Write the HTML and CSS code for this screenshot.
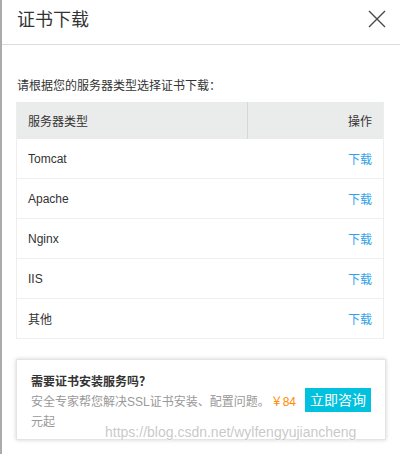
FILE: index.html
```html
<!DOCTYPE html>
<html>
<head>
<meta charset="utf-8">
<link rel="stylesheet" href="styles.css">
</head>
<body>
<div class="page">
  <div class="header">
    <span class="title">证书下载</span>
    <svg class="close" width="18" height="18" viewBox="0 0 18 18"><path d="M1 1 L17 17 M17 1 L1 17" stroke="#4a4a4a" stroke-width="1.4" fill="none"/></svg>
  </div>
  <div class="content">
    <p class="intro">请根据您的服务器类型选择证书下载：</p>
    <div class="table">
      <div class="thead">
        <div class="c1">服务器类型</div>
        <div class="c2">操作</div>
      </div>
      <div class="row"><div class="c1">Tomcat</div><div class="c2"><a class="dl">下载</a></div></div>
      <div class="row"><div class="c1">Apache</div><div class="c2"><a class="dl">下载</a></div></div>
      <div class="row"><div class="c1">Nginx</div><div class="c2"><a class="dl">下载</a></div></div>
      <div class="row"><div class="c1">IIS</div><div class="c2"><a class="dl">下载</a></div></div>
      <div class="row"><div class="c1">其他</div><div class="c2"><a class="dl">下载</a></div></div>
    </div>
    <div class="promo">
      <div class="promo-title">需要证书安装服务吗？</div>
      <div class="promo-text"><span class="btn">立即咨询</span>安全专家帮您解决SSL证书安装、配置问题。<span class="price">￥84</span> 元起</div>
    </div>
  </div>
  <div class="watermark">https://blog.csdn.net/wylfengyujiancheng</div>
</div>
</body>
</html>
```

FILE: styles.css
```css
html, body {
  margin: 0;
  padding: 0;
  background: #fff;
}
body {
  font-family: "Liberation Sans", "Noto Sans CJK SC", sans-serif;
  color: #333;
}
.page {
  position: relative;
  height: 454px;
  border-left: 2px solid #ababab;
  box-sizing: border-box;
  overflow: hidden;
}
.header {
  height: 44px;
  border-bottom: 1px solid #dcdcdc;
  display: flex;
  align-items: center;
  justify-content: space-between;
  padding: 0 14px 0 15px;
}
.title {
  font-size: 18px;
  color: #333;
  line-height: 24px;
  margin-top: -4px;
}
.close {
  display: block;
  margin-top: -6px;
}
.content {
  padding: 0 14px 0 14px;
}
.intro {
  margin: 32px 0 7px 1px;
  font-size: 12px;
  line-height: 18px;
  color: #333;
}
.table {
  border-left: 1px solid #eeeeee;
  border-right: 1px solid #eeeeee;
  width: 368px;
  box-sizing: border-box;
}
.thead {
  display: flex;
  height: 37px;
  background: #eaebeb;
  font-size: 12px;
  align-items: stretch;
}
.thead .c1 {
  width: 231px;
  border-right: 1px solid #d6d6d6;
  display: flex;
  align-items: center;
  padding-left: 11px;
  box-sizing: border-box;
}
.thead .c2 {
  flex: 1;
  display: flex;
  align-items: center;
  justify-content: flex-end;
  padding-right: 11px;
}
.row {
  display: flex;
  height: 40px;
  border-bottom: 1px solid #f0f0f0;
  box-sizing: border-box;
  align-items: center;
  font-size: 12px;
}
.row .c1 {
  flex: 1;
  padding-left: 11px;
  color: #333;
}
.row .c2 {
  padding-right: 11px;
}
.dl {
  color: #2ea3ea;
}
.promo {
  margin-top: 20px;
  width: 370px;
  box-sizing: border-box;
  height: 81px;
  border: 1px solid #e4e4e4;
  box-shadow: 0 0 4px rgba(0, 0, 0, 0.18);
  padding: 12px 14px 8px 14px;
  font-size: 12px;
  line-height: 20px;
}
.promo-title {
  font-weight: bold;
  color: #333;
}
.promo-text {
  color: #999;
}
.price {
  color: #ff8a00;
  margin-left: 1px;
}
.btn {
  float: right;
  margin-top: -4px;
  margin-left: 3px;
  width: 66px;
  height: 24px;
  line-height: 24px;
  background: #00c1de;
  color: #fff;
  font-size: 14px;
  text-align: center;
}
.watermark {
  position: absolute;
  left: 103px;
  top: 424px;
  font-size: 14px;
  color: rgba(190, 190, 190, 0.85);
  text-shadow: 0 0 2px #fff, 0 0 2px #fff;
  white-space: nowrap;
}
```
